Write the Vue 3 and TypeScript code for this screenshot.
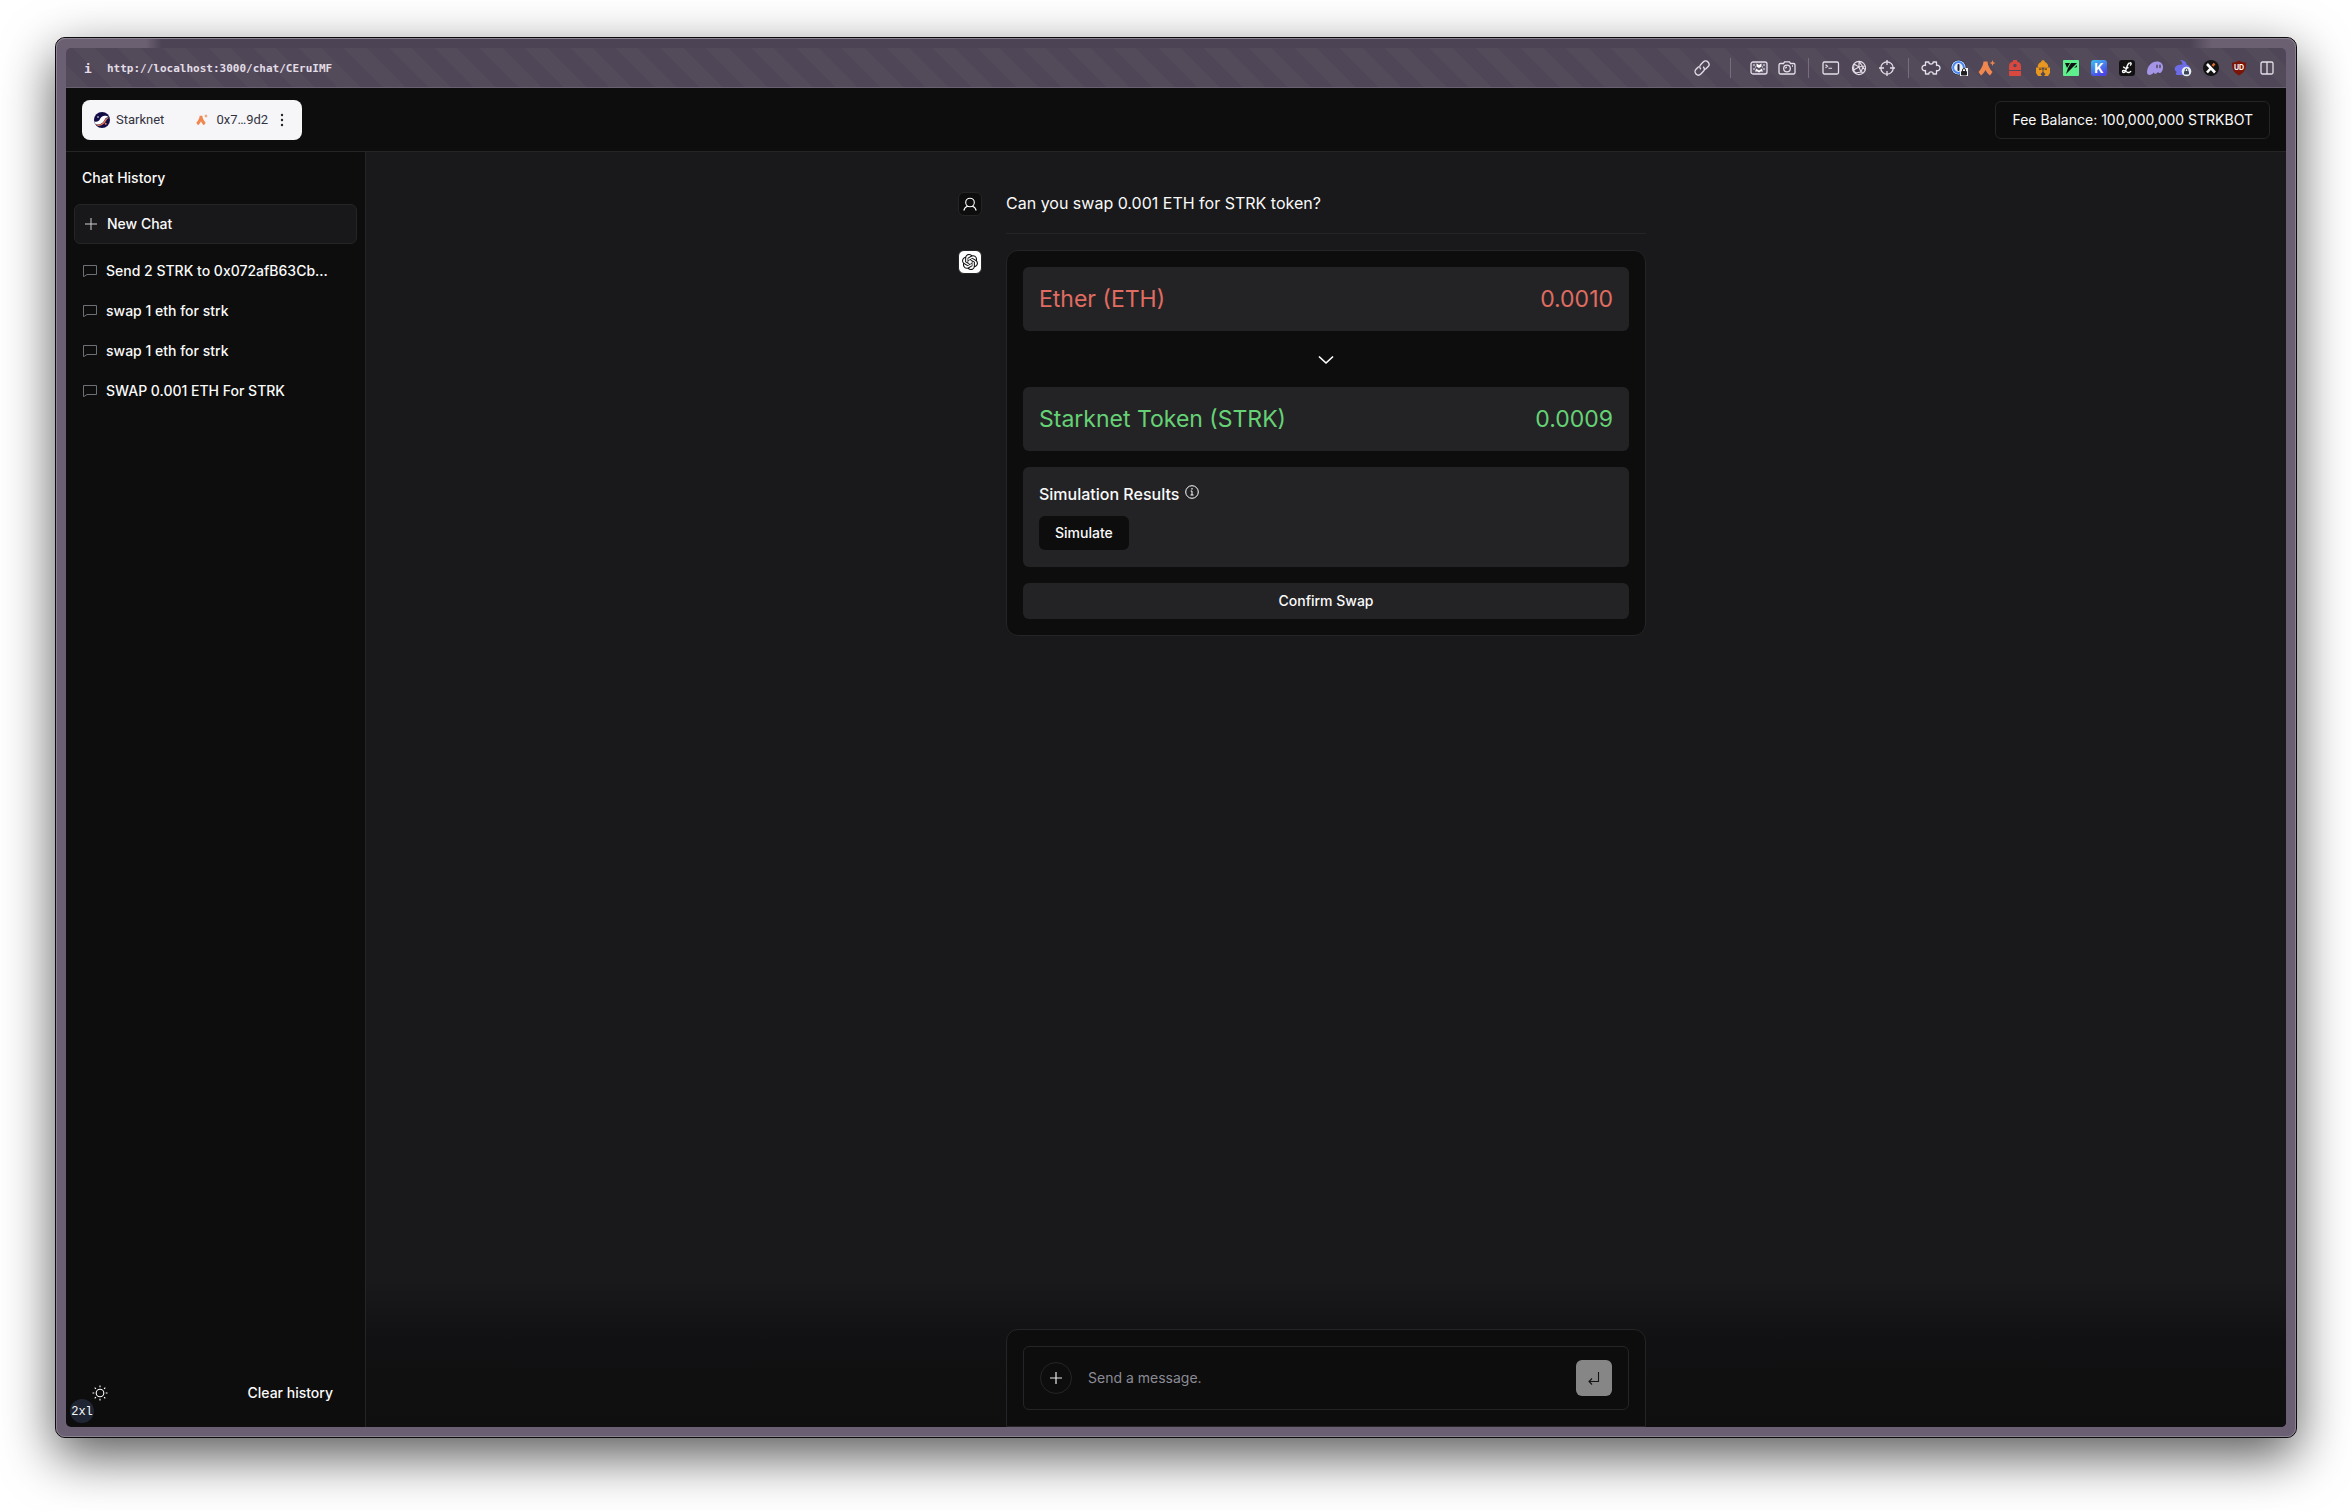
<script setup lang="ts">
import { ref } from 'vue'

interface Chat {
  id: number
  title: string
}

interface Leg {
  name: string
  amount: string
  tone: 'sell' | 'buy'
}

const chats: Chat[] = [
  { id: 1, title: 'Send 2 STRK to 0x072afB63Cb…' },
  { id: 2, title: 'swap 1 eth for strk' },
  { id: 3, title: 'swap 1 eth for strk' },
  { id: 4, title: 'SWAP 0.001 ETH For STRK' },
]

const sell: Leg = { name: 'Ether (ETH)', amount: '0.0010', tone: 'sell' }
const buy: Leg = { name: 'Starknet Token (STRK)', amount: '0.0009', tone: 'buy' }
const draft = ref('')
</script>

<template>
  <div class="desktop">
    <div class="window">
      <div class="toolbar">
        <span class="info">i</span>
        <span class="url">http://localhost:3000/chat/CEruIMF</span>
        <div class="tools">
          <button class="tool" aria-label="Copy link">
            <svg width="18" height="18" viewBox="0 0 16 16" fill="none" stroke="#e4dfe8" stroke-width="1.2">
              <g transform="rotate(-45 8 8)">
                <path d="M7 5H3.500a3 3 0 0 0 0 6H6.500a3 3 0 0 0 3-3" />
                <path d="M9 11h3.500a3 3 0 0 0 0-6H9.500a3 3 0 0 0-3 3" />
              </g>
            </svg>
          </button>
          <span class="sep wide"></span>
          <button class="tool" aria-label="Picture capture">
            <svg width="18" height="16" viewBox="0 0 18 16">
              <rect x="1" y="2" width="16" height="12" rx="2" fill="#5f5568" stroke="#e4dfe8" stroke-width="1.300" />
              <path d="M3 4h2v2H3zM3 8h2v2H3zM13 4h2v2h-2zM13 8h2v2h-2zM5 6h1v2H5zM12 6h1v2h-1zM5 10h2v2H5zM11 10h2v2h-2z" fill="#a9a1b0" />
              <path d="M6.500 3.500 9 5l2.500-1.500v3L9 8 6.500 6.500zM5.800 8.500l3.200 2 3.200-2v2L9 12.500l-3.200-2z" fill="#fff" />
            </svg>
          </button>
          <button class="tool" aria-label="Screenshot">
            <svg width="18" height="16" viewBox="0 0 18 16" fill="none" stroke="#e4dfe8" stroke-width="1.300">
              <path d="M2.500 3.500h3L6.500 1.800h5l1 1.700h3A1.500 1.500 0 0 1 17 5v7.500a1.500 1.500 0 0 1-1.500 1.500h-13A1.500 1.500 0 0 1 1 12.500V5a1.500 1.500 0 0 1 1.500-1.500z" />
              <circle cx="9" cy="8.500" r="3.300" />
              <path d="M7.600 8.500A1.400 1.400 0 0 1 9 7.100M14 6h1" />
            </svg>
          </button>
          <span class="sep"></span>
          <button class="tool" aria-label="Console">
            <svg width="18" height="16" viewBox="0 0 18 16" fill="none" stroke="#e4dfe8" stroke-width="1.300">
              <rect x="1" y="2" width="15.500" height="12" rx="1.500" />
              <path d="M3.500 4.800 5.500 6.300 3.500 7.800M6.500 8.300h3.500" stroke-width="1.100" />
            </svg>
          </button>
          <button class="tool" aria-label="Network">
            <svg width="16" height="16" viewBox="0 0 16 16" fill="none" stroke="#e4dfe8" stroke-width="1.100">
              <circle cx="8" cy="8" r="6.600" />
              <path d="M8 1.400 12 7l-2 5-6 1M3 4l5 3 6.400-1M3 4l-.5 6L8 7l2 5 3 .5M8 1.400 8 7M5.500 14 2.500 10M12 7l2 3" />
            </svg>
          </button>
          <button class="tool" aria-label="Inspect">
            <svg width="18" height="18" viewBox="0 0 18 18" fill="none" stroke="#e4dfe8" stroke-width="1.300">
              <circle cx="9" cy="9" r="6.200" />
              <path d="M9 1v5M9 12v5M1 9h5M12 9h5" />
            </svg>
          </button>
          <span class="sep"></span>
          <button class="tool" aria-label="Extensions">
            <svg width="20" height="16" viewBox="0 0 20 16" fill="none" stroke="#e4dfe8" stroke-width="1.300" stroke-linejoin="round">
              <path d="M4.500 2h3.300c0 2.800 4.400 2.800 4.400 0h3.300v3.500c1.200-.6 3.500 0 3.500 2.500s-2.300 3.100-3.500 2.500V14h-3.300c0-2.800-4.400-2.800-4.400 0H4.500v-3.500C3.300 11.100 1 10.500 1 8s2.300-3.100 3.500-2.500z" />
            </svg>
          </button>
          <button class="tool" aria-label="Password manager">
            <svg width="18" height="18" viewBox="0 0 18 18">
              <circle cx="8.500" cy="8.500" r="7.800" fill="#25304a" />
              <circle cx="8.500" cy="8.500" r="7" fill="#e9edf5" />
              <circle cx="8.500" cy="8.500" r="5.400" fill="none" stroke="#4a86f0" stroke-width="2" />
              <rect x="7.500" y="5" width="2" height="7" rx="1" fill="#1b2236" />
              <path d="M10 9h8v8h-8z" fill="#f2f2f2" />
              <rect x="11" y="12" width="6" height="4.500" rx="1" fill="#222" />
              <path d="M12.500 12v-1a1.500 1.500 0 0 1 3 0v1" fill="none" stroke="#222" />
            </svg>
          </button>
          <button class="tool" aria-label="Argent X">
            <svg width="18" height="18" viewBox="0 0 18 18" fill="#f0874f">
              <path d="M5.500 2.500h4c.2 3.500 2 7 5 10.500L12 16.500c-2-1.500-3.500-3.300-4.500-5.500-1 2.200-2.500 4-4.500 5.500L.5 13c3-3.500 4.800-7 5-10.500z" />
              <path d="m14.500 1 .8 2.200 2.200.8-2.200.8-.8 2.200-.8-2.200-2.200-.8 2.200-.8z" />
            </svg>
          </button>
          <button class="tool" aria-label="Backpack">
            <svg width="16" height="18" viewBox="0 0 16 18">
              <path d="M6 1h4v1.500c3 .5 4 2.500 4 5V11H2V7.500c0-2.500 1-4.500 4-5zM2 12h12v4a1 1 0 0 1-1 1H3a1 1 0 0 1-1-1z" fill="#d8483e" />
              <circle cx="8" cy="6.500" r="1.700" fill="#53495c" />
            </svg>
          </button>
          <button class="tool" aria-label="Warrior wallet">
            <svg width="16" height="18" viewBox="0 0 16 18" fill="#e8981f">
              <path d="M8 1a2.500 2.500 0 0 1 2 2c2.500 1 3.300 3 3.300 5.500H2.700C2.700 6 3.500 4 6 3a2.500 2.500 0 0 1 2-2z" />
              <path d="M1 8.500h5.500l1 2.500v2L5.500 15 7 17H3l-2-3zM15 8.500H9.500l-1 2.500v2l2 2L9 17h4l2-3z" />
              <path d="M4 10.200h2.500M9.500 10.200H12" stroke="#5b3a12" stroke-width="1.200" />
            </svg>
          </button>
          <button class="tool" aria-label="Form filler">
            <svg width="16" height="16" viewBox="0 0 16 16">
              <rect width="16" height="16" rx="1" fill="#5df08c" />
              <path d="M2 3h5l-3 5zM8 3h6L3 14l2-6zM11 8l3-3v2z" fill="#111" />
            </svg>
          </button>
          <button class="tool" aria-label="Keplr">
            <svg width="16" height="16" viewBox="0 0 16 16">
              <defs>
                <linearGradient id="keplr" x1="0" y1="0" x2="0.500" y2="1">
                  <stop offset="0" stop-color="#3fc0f0" />
                  <stop offset="1" stop-color="#4a46e8" />
                </linearGradient>
              </defs>
              <rect width="16" height="16" rx="3" fill="url(#keplr)" />
              <text x="8" y="12.500" text-anchor="middle" class="mark" font-size="13" fill="#fff">K</text>
            </svg>
          </button>
          <button class="tool" aria-label="Leather">
            <svg width="16" height="16" viewBox="0 0 16 16">
              <rect width="16" height="16" rx="3" fill="#111" />
              <path d="M11 5.500c1.500-1 1.500-3 0-2.800C8 3 7.500 9 6.500 11.500c-.8 1.500-3 1.500-3 0 0-1.600 2.500-1 4 .2 1.600 1.200 3.500 1 4.500-.7M4.500 6.500c0 2 3 2 5 .8" fill="none" stroke="#fff" stroke-width="1.400" />
            </svg>
          </button>
          <button class="tool" aria-label="Phantom">
            <svg width="18" height="16" viewBox="0 0 18 16">
              <path d="M1 12C1.500 6 5.500 1.500 11 1.500c4 0 6 2.500 6 5.500 0 4-2 6-3.500 6-1 0-1.300-.7-1.300-1.300-1 1.500-2.300 2.300-3.400 2-.7-.2-.9-.8-.8-1.400C6.500 14 5 15 3.500 15 2 15 1 14 1 12z" fill="#a595e8" />
              <path d="M11 5.200v2.300M14 5.200v2.300" stroke="#4c4260" stroke-width="1.400" stroke-linecap="round" />
            </svg>
          </button>
          <button class="tool" aria-label="Rabby">
            <svg width="18" height="18" viewBox="0 0 18 18">
              <path d="M6 1c3.500 0 6.500 1.500 6.500 4.500C15 6.500 16 8 16.500 10l-5 6H4c-2.500 0-3-2-1-3C0 12 0 8 3 6.500 5 5.500 7 5.500 8.500 5.500 8.500 3.500 7.500 2.500 6 1z" fill="#6c6ce8" />
              <circle cx="12.500" cy="12.500" r="4.800" fill="#e8edf5" />
              <rect x="10" y="12" width="5" height="3.500" rx="1" fill="#3b4658" />
              <path d="M11.200 12v-1a1.300 1.300 0 0 1 2.600 0v1" fill="none" stroke="#3b4658" />
            </svg>
          </button>
          <button class="tool" aria-label="Xverse">
            <svg width="18" height="18" viewBox="0 0 18 18" fill="none">
              <circle cx="9" cy="9" r="8" fill="#131313" />
              <path d="m5 5 8 8.500M5 13.500 9 9" stroke="#fff" stroke-width="2.600" />
              <path d="m10.500 7 2-2.500" stroke="#e0702c" stroke-width="2.400" />
            </svg>
          </button>
          <button class="tool" aria-label="uBlock Origin">
            <svg width="16" height="16" viewBox="0 0 16 16">
              <path d="M8 .5c2 1.500 4.500 2 7 2 0 6-1 10-7 13-6-3-7-7-7-13 2.500 0 5-.5 7-2z" fill="#7a1508" />
              <text x="8" y="10" text-anchor="middle" class="mark" font-size="7" fill="#fff">UD</text>
            </svg>
          </button>
          <button class="tool" aria-label="Split view">
            <svg width="14" height="14" viewBox="0 0 14 14" fill="none" stroke="#e4dfe8" stroke-width="1.300">
              <rect x="1" y="1" width="12" height="12" rx="1.500" />
              <path d="M7 1v12" />
            </svg>
          </button>
        </div>
      </div>

      <div class="app">
        <header class="header">
          <button class="wallet">
            <svg width="16" height="16" viewBox="0 0 16 16">
              <circle cx="8" cy="8" r="8" fill="#120c46" />
              <path d="M0 9.500c3 .8 5-.2 6-2.500 1-2.500 3.500-4 6.800-3l2 1c-3 .1-3.800 2-5 4.200C8.300 11.500 5 13.500 1.500 12z" fill="#fff" />
              <path d="M1.700 12.500c4 1 7-.5 8.500-3.500 1-2.200 2.500-3.500 5-3.200C11.500 7 12 12.500 6 13.800c-1.600.3-3 0-4.300-1.300z" fill="#ee7f5c" />
              <circle cx="11.700" cy="11.800" r="1" fill="#ee7f5c" />
              <circle cx="4" cy="5" r=".8" fill="#fff" />
            </svg>
            <span class="network">Starknet</span>
            <svg width="12" height="12" viewBox="0 0 18 18" fill="#f0874f">
              <path d="M5.500 2.500h4c.2 3.500 2 7 5 10.500L12 17c-2-1.500-3.500-3.300-4.500-6-1 2.700-2.500 4.500-4.500 6L.5 13c3-3.500 4.800-7 5-10.500z" />
              <path d="m15 0 .8 2.200L18 3l-2.200.8L15 6l-.8-2.200L12 3l2.200-.8z" />
            </svg>
            <span class="address">0x7…9d2</span>
            <svg width="4" height="14" viewBox="0 0 4 14" fill="#23232f">
              <circle cx="2" cy="2" r="1.200" />
              <circle cx="2" cy="7" r="1.200" />
              <circle cx="2" cy="12" r="1.200" />
            </svg>
          </button>
          <div class="fee">Fee Balance: 100,000,000 STRKBOT</div>
        </header>

        <div class="body">
          <aside class="sidebar">
            <h4 class="history">Chat History</h4>
            <a class="new-chat" href="#new">
              <svg width="14" height="14" viewBox="0 0 14 14" stroke="#d0d0d0" stroke-width="1">
                <path d="M7 1v12M1 7h12" />
              </svg>
              New Chat
            </a>
            <nav class="chats">
              <a v-for="chat in chats" :key="chat.id" class="chat" :href="'#chat-' + chat.id">
                <svg width="16" height="16" viewBox="0 0 16 16" fill="none" stroke="#6f6f76" stroke-width="1">
                  <path d="M1.500 2.500h13v9H5L2 13.500h-.5z" />
                </svg>
                <span>{{ chat.title }}</span>
              </a>
            </nav>
            <div class="side-foot">
              <button class="theme" aria-label="Toggle theme">
                <svg width="16" height="16" viewBox="0 0 16 16" fill="none" stroke="#fff" stroke-width="1.100">
                  <circle cx="8" cy="8" r="3.800" />
                  <path d="M8 .5v1.800M8 13.700v1.800M.5 8h1.800M13.700 8h1.800M2.700 2.700l1.200 1.200M12.100 12.100l1.200 1.200M2.700 13.300l1.200-1.200M12.100 3.900l1.200-1.200" />
                </svg>
              </button>
              <button class="clear">Clear history</button>
              <span class="breakpoint">2xl</span>
            </div>
          </aside>

          <main class="main">
            <section class="thread">
              <div class="message">
                <span class="avatar dark">
                  <svg width="16" height="16" viewBox="0 0 16 16" fill="none" stroke="#fff" stroke-width="1.100">
                    <circle cx="8" cy="6.500" r="4.300" />
                    <path d="M1.800 14.500c.6-2.500 2-3.800 4-4.300M14.200 14.500c-.6-2.500-2-3.800-4-4.300" />
                  </svg>
                </span>
                <p class="question">Can you swap 0.001 ETH for STRK token?</p>
              </div>
              <hr class="rule" />
              <div class="message">
                <span class="avatar light">
                  <svg width="16" height="16" viewBox="0 0 24 24" fill="#111">
                    <path d="M22.2819 9.8211a5.9847 5.9847 0 0 0-.5157-4.9108 6.0462 6.0462 0 0 0-6.5098-2.9A6.0651 6.0651 0 0 0 4.9807 4.1818a5.9847 5.9847 0 0 0-3.9977 2.9 6.0462 6.0462 0 0 0 .7427 7.0966 5.98 5.98 0 0 0 .511 4.9107 6.051 6.051 0 0 0 6.5146 2.9001A5.9847 5.9847 0 0 0 13.2599 24a6.0557 6.0557 0 0 0 5.7718-4.2058 5.9894 5.9894 0 0 0 3.9977-2.9001 6.0557 6.0557 0 0 0-.7475-7.0729zm-9.022 12.6081a4.4755 4.4755 0 0 1-2.8764-1.0408l.1419-.0804 4.7783-2.7582a.7948.7948 0 0 0 .3927-.6813v-6.7369l2.02 1.1686a.071.071 0 0 1 .038.052v5.5826a4.504 4.504 0 0 1-4.4945 4.4944zm-9.6607-4.1254a4.4708 4.4708 0 0 1-.5346-3.0137l.142.0852 4.783 2.7582a.7712.7712 0 0 0 .7806 0l5.8428-3.3685v2.3324a.0804.0804 0 0 1-.0332.0615L9.74 19.9502a4.4992 4.4992 0 0 1-6.1408-1.6464zM2.3408 7.8956a4.485 4.485 0 0 1 2.3655-1.9728V11.6a.7664.7664 0 0 0 .3879.6765l5.8144 3.3543-2.0201 1.1685a.0757.0757 0 0 1-.071 0l-4.8303-2.7865A4.504 4.504 0 0 1 2.3408 7.872zm16.5963 3.8558L13.1038 8.364 15.1192 7.2a.0757.0757 0 0 1 .071 0l4.8303 2.7913a4.4944 4.4944 0 0 1-.6765 8.1042v-5.6772a.79.79 0 0 0-.407-.667zm2.0107-3.0231l-.142-.0852-4.7735-2.7818a.7759.7759 0 0 0-.7854 0L9.409 9.2297V6.8974a.0662.0662 0 0 1 .0284-.0615l4.8303-2.7866a4.4992 4.4992 0 0 1 6.6802 4.66zM8.3065 12.863l-2.02-1.1638a.0804.0804 0 0 1-.038-.0567V6.0742a4.4992 4.4992 0 0 1 7.3757-3.4537l-.142.0805L8.704 5.459a.7948.7948 0 0 0-.3927.6813zm1.0976-2.3654l2.602-1.4998 2.6069 1.4998v2.9994l-2.5974 1.4997-2.6067-1.4997Z" />
                  </svg>
                </span>
                <div class="card">
                  <div class="leg" :class="sell.tone">
                    <span>{{ sell.name }}</span>
                    <span>{{ sell.amount }}</span>
                  </div>
                  <div class="arrow">
                    <svg width="16" height="8" viewBox="0 0 16 8" fill="none" stroke="#fff" stroke-width="1.700" stroke-linecap="round" stroke-linejoin="round">
                      <path d="m1.500 1 6.500 6 6.500-6" />
                    </svg>
                  </div>
                  <div class="leg" :class="buy.tone">
                    <span>{{ buy.name }}</span>
                    <span>{{ buy.amount }}</span>
                  </div>
                  <div class="simulation">
                    <div class="sim-title">
                      Simulation Results
                      <svg width="14" height="14" viewBox="0 0 14 14" fill="none" stroke="#fff" stroke-width="1">
                        <circle cx="7" cy="7" r="6.300" />
                        <path d="M5.700 6H7v4M5.500 10h3" />
                        <circle cx="7" cy="3.900" r=".4" />
                      </svg>
                    </div>
                    <button class="simulate">Simulate</button>
                  </div>
                  <button class="confirm">Confirm Swap</button>
                </div>
              </div>
            </section>

            <footer class="dock">
              <form class="composer" @submit.prevent>
                <div class="field">
                  <button type="button" class="add" aria-label="New chat">
                    <svg width="14" height="14" viewBox="0 0 14 14" stroke="#e8e8e8" stroke-width="1.200">
                      <path d="M7 1v12M1 7h12" />
                    </svg>
                  </button>
                  <input v-model="draft" class="prompt" type="text" placeholder="Send a message." aria-label="Message" />
                  <button type="submit" class="send" aria-label="Send message">
                    <svg width="14" height="14" viewBox="0 0 14 14" fill="none" stroke="#141414" stroke-width="1.100">
                      <path d="M11.500 1v9.500H2.500M5 7.500l-3 3 3 3" />
                    </svg>
                  </button>
                </div>
              </form>
            </footer>
          </main>
        </div>
      </div>
    </div>
  </div>
</template>

<style>
body {
  margin: 0;
  background: #fff;
}
</style>

<style scoped>
.desktop {
  box-sizing: border-box;
  min-height: 100vh;
  padding: 37px 55px 73px;
  display: flex;
  overflow: hidden;
  background: #fff;
  color: #fafafa;
  font-family: Inter, "Liberation Sans", sans-serif;
  font-size: 14px;
  line-height: 20px;
}
.desktop *,
.desktop *::before {
  box-sizing: border-box;
}
button {
  margin: 0;
  padding: 0;
  border: 0;
  background: none;
  color: inherit;
  font: inherit;
  cursor: pointer;
}
svg {
  display: block;
  flex: none;
}
.window {
  flex: 1;
  min-width: 0;
  display: flex;
  flex-direction: column;
  padding: 9px;
  border: 1px solid #0b0a0c;
  outline: 1px solid #8b8292;
  outline-offset: -2px;
  border-radius: 10px;
  background: linear-gradient(90deg, #6a6071 90px, #4c4354 106px, #4c4354 calc(100% - 106px), #6a6071 calc(100% - 84px)) top / 100% 11px no-repeat, #6b6073;
  box-shadow: 0 18px 52px rgba(0, 0, 0, 0.66);
}
.toolbar {
  height: 40px;
  margin: 1px 1px 0;
  padding: 0 5px 0 18px;
  display: flex;
  align-items: center;
  border-bottom: 1px solid #6a6072;
  border-radius: 5px 5px 0 0;
  background: repeating-linear-gradient(45deg, #544b5a 0 16px, #4f4658 16px 32px);
  color: #e2dde6;
  font-family: "DejaVu Sans Mono", "Liberation Mono", monospace;
  font-weight: 700;
  font-size: 11px;
}
.info,
.url {
  padding-top: 2px;
}
.info {
  width: 23px;
  font-size: 13px;
}
.tools {
  margin-left: auto;
  display: flex;
  align-items: center;
}
.tool {
  width: 28px;
  height: 28px;
  display: flex;
  align-items: center;
  justify-content: center;
}
.mark {
  font-family: Inter, sans-serif;
  font-weight: 700;
}
.sep {
  width: 1px;
  height: 20px;
  margin: 0 8px 0 7px;
  background: #776d80;
}
.sep.wide {
  margin: 0 14px;
}
.app {
  flex: 1;
  margin: 0 1px 1px;
  display: flex;
  flex-direction: column;
  border-radius: 0 0 5px 5px;
  background: #0d0d0d;
  overflow: hidden;
}
.header {
  height: 64px;
  padding: 0 16px;
  display: flex;
  align-items: center;
  justify-content: space-between;
  border-bottom: 1px solid #252527;
}
.wallet {
  height: 40px;
  padding: 0 18px 0 12px;
  display: flex;
  align-items: center;
  border-radius: 8px;
  background: #f6f6f9;
  color: #33333e;
  font-family: Roboto, "Noto Sans", sans-serif;
  font-size: 13px;
}
.network {
  margin: 0 32px 0 6px;
}
.address {
  margin: 0 12px 0 8px;
}
.fee {
  height: 38px;
  padding: 8px 16px;
  border: 1px solid #252527;
  border-radius: 6px;
}
.body {
  flex: 1;
  display: flex;
}
.sidebar {
  width: 300px;
  padding: 16px 8px;
  display: flex;
  flex-direction: column;
  border-right: 1px solid #252527;
  font-weight: 500;
}
.history {
  margin: 0 0 16px;
  padding: 0 8px;
  font-size: 14px;
  font-weight: 500;
}
.new-chat {
  height: 40px;
  padding: 0 9px;
  display: flex;
  align-items: center;
  gap: 9px;
  border: 1px solid #252527;
  border-radius: 6px;
  background: #18181a;
  color: inherit;
  text-decoration: none;
}
.chats {
  margin-top: 7px;
}
.chat {
  height: 40px;
  padding: 0 8px;
  display: flex;
  align-items: center;
  gap: 8px;
  color: inherit;
  text-decoration: none;
}
.side-foot {
  position: relative;
  margin-top: auto;
  padding: 0 24px 8px 18px;
  display: flex;
  align-items: center;
  justify-content: space-between;
}
.breakpoint {
  position: absolute;
  left: -4px;
  bottom: -12px;
  width: 24px;
  height: 24px;
  border-radius: 50%;
  background: #1f2533;
  font-family: "Liberation Mono", monospace;
  font-weight: 400;
  font-size: 12px;
  line-height: 26px;
  text-align: center;
}
.main {
  flex: 1;
  min-width: 0;
  display: flex;
  flex-direction: column;
  background: #19191b;
}
.thread {
  width: 640px;
  max-width: 100%;
  margin: 0 auto;
  padding-top: 40px;
}
.message {
  margin-left: -48px;
  display: flex;
  align-items: flex-start;
  gap: 24px;
}
.avatar {
  width: 24px;
  height: 24px;
  flex: none;
  display: flex;
  align-items: center;
  justify-content: center;
  border: 1px solid #252527;
  border-radius: 6px;
}
.avatar.dark {
  background: #0d0d0d;
}
.avatar.light {
  background: #fff;
}
.question {
  margin: 0;
  font-size: 16px;
  line-height: 22px;
}
.rule {
  height: 1px;
  margin: 17px 0 16px;
  border: 0;
  background: #252527;
}
.card {
  flex: 1;
  padding: 16px;
  display: flex;
  flex-direction: column;
  gap: 16px;
  border: 1px solid #252527;
  border-radius: 12px;
  background: #0d0d0d;
}
.leg {
  height: 64px;
  padding: 0 16px;
  display: flex;
  align-items: center;
  justify-content: space-between;
  border-radius: 6px;
  background: #232325;
  font-size: 23px;
  line-height: 32px;
}
.leg.sell {
  color: #e06c62;
}
.leg.buy {
  color: #66d276;
}
.arrow {
  height: 24px;
  padding-top: 2px;
  display: flex;
  align-items: center;
  justify-content: center;
}
.simulation {
  height: 100px;
  padding: 16px;
  border-radius: 6px;
  background: #232325;
}
.sim-title {
  margin-bottom: 11px;
  display: flex;
  gap: 6px;
  font-size: 16px;
  font-weight: 500;
  line-height: 22px;
}
.sim-title svg {
  margin-top: 2px;
}
.simulate {
  height: 34px;
  padding: 0 16px;
  border-radius: 6px;
  background: #0d0d0d;
  font-weight: 500;
}
.confirm {
  height: 36px;
  border-radius: 6px;
  background: #232325;
  font-weight: 500;
}
.dock {
  margin-top: auto;
  padding-top: 48px;
  background: linear-gradient(#19191b, #111113 60px, #0f0f0f);
}
.composer {
  width: 640px;
  max-width: 100%;
  margin: 0 auto;
  padding: 16px;
  border: 1px solid #252527;
  border-radius: 12px 12px 0 0;
  background: #0d0d0d;
}
.field {
  height: 64px;
  padding: 0 16px;
  display: flex;
  align-items: center;
  gap: 16px;
  border: 1px solid #252527;
  border-radius: 6px;
}
.add {
  width: 32px;
  height: 32px;
  display: flex;
  align-items: center;
  justify-content: center;
  border: 1px solid #252527;
  border-radius: 50%;
}
.prompt {
  flex: 1;
  min-width: 0;
  padding: 0;
  border: 0;
  outline: 0;
  background: none;
  color: inherit;
  font: inherit;
}
.prompt::placeholder {
  color: #8b8b95;
  opacity: 1;
}
.send {
  width: 36px;
  height: 36px;
  display: flex;
  align-items: center;
  justify-content: center;
  border-radius: 6px;
  background: #868686;
}
</style>
